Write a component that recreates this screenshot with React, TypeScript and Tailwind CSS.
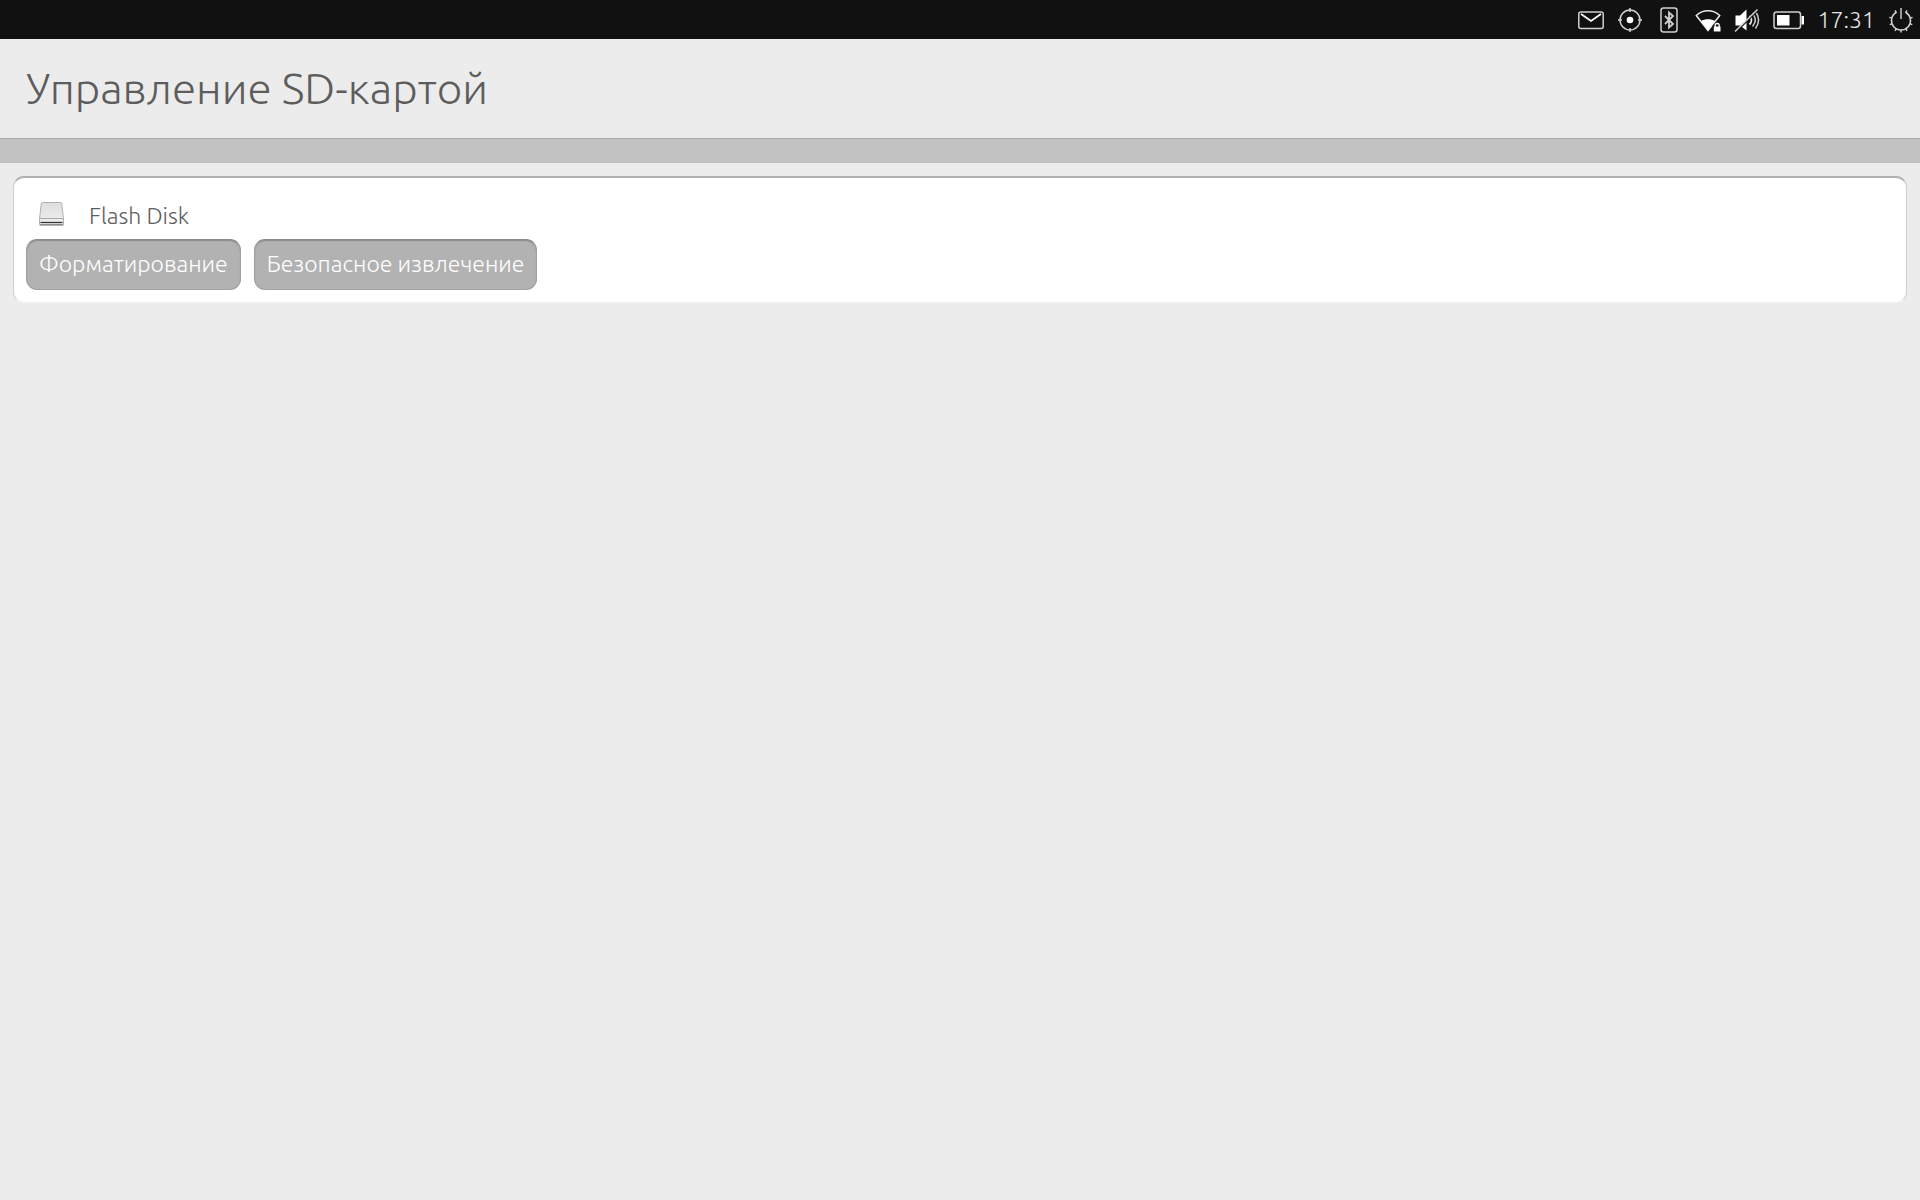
type IconProps = { label: string; children: React.ReactNode; width?: string; box?: string };

function StatusIcon({ label, children, width = "w-[26px]", box = "0 0 26 26" }: IconProps) {
  return (
    <svg
      role="img"
      aria-label={label}
      viewBox={box}
      className={`${width} h-[26px] shrink-0`}
      fill="none"
      stroke="#cfcfcf"
      strokeWidth="1.5"
    >
      {children}
    </svg>
  );
}

// the power symbol is a broken ring with short rays around it
const RAYS = [20, 60, 90, 120, 160, -15, -165].map((deg) => {
  const a = (deg * Math.PI) / 180;
  return {
    x1: 13 + 9.5 * Math.cos(a),
    y1: 13.5 + 9.5 * Math.sin(a),
    x2: 13 + 12 * Math.cos(a),
    y2: 13.5 + 12 * Math.sin(a),
  };
});

function StatusBar() {
  return (
    <header className="flex h-[39px] items-center justify-end gap-[13px] bg-[#111] pr-[6px] text-[#e6e6e6]">
      <StatusIcon label="Сообщения">
        <rect x="0.8" y="5" width="24.4" height="16.5" rx="2" />
        <path d="M3 7 13 14l10-7" stroke="#fff" strokeWidth="1.8" />
      </StatusIcon>
      <StatusIcon label="Местоположение">
        <circle cx="13" cy="13" r="10" />
        <circle cx="13" cy="13" r="3.3" fill="#fff" stroke="none" />
        <path d="M13 1v4M13 21v4M1 13h4M21 13h4" />
      </StatusIcon>
      <StatusIcon label="Bluetooth">
        <rect x="5" y="1" width="16" height="24" rx="2.5" />
        <path d="m9 9 8 8-4 3.500V5.500L17 9l-8 8" strokeWidth="1.8" />
      </StatusIcon>
      <StatusIcon label="Wi-Fi">
        <path d="M1.300 8.500C8 2.300 18 2.300 24.700 8.500L13 23.500Z" stroke="#e8e8e8" />
        <path d="M6 14c4-2.500 10-2.500 14 0L13 23.500Z" fill="#fff" stroke="none" />
        <path d="M17.500 24.500v-6q3.500-5 8.500 0v6Z" fill="#111" stroke="none" />
        <path d="M18.800 19.500h6.700v5h-6.700Z" fill="#fff" stroke="none" />
        <path d="M20.200 20v-1.500a2 2 0 0 1 4 0V20" stroke="#fff" strokeWidth="1.300" />
      </StatusIcon>
      <StatusIcon label="Звук выключен">
        <path d="M1.500 8.500h4.500L12.500 2.500v21L6 18.500H1.500Z" fill="#fff" stroke="none" />
        <path d="M15.500 9c2.500 2.500 2.500 6 0 8.500" stroke="#eee" strokeWidth="1.800" />
        <path d="M18.500 6.500c3.500 4 3.500 9 0 13M21.500 4.500c4 5.500 4 11.500 0 17" />
        <path d="M1.500 25.500 24.500 3" stroke="#111" strokeWidth="1.300" />
        <path d="M1 24.500 23.500 2.500" />
      </StatusIcon>
      <StatusIcon label="Батарея" width="w-[32px]" box="0 0 32 26">
        <rect x="1" y="5" width="26.500" height="16.500" rx="2.500" />
        <path d="M4 8h12.500v10.500H4Z" fill="#fff" stroke="none" />
        <path d="M28.500 9h2.500v8.500h-2.500Z" fill="#fff" stroke="none" />
      </StatusIcon>
      <time className="text-[23px] leading-[26px]">17:31</time>
      <button type="button" aria-label="Выключение" className="shrink-0">
        <StatusIcon label="Выключение">
          <path d="M8 5.500a9.500 9.500 0 1 0 10 0" />
          <path d="M13 1v11" stroke="#999" strokeWidth="2" />
          <path d="M8.500 6 7 3.500M17.500 6 19 3.500" />
          {RAYS.map((ray, i) => (
            <line key={i} {...ray} />
          ))}
        </StatusIcon>
      </button>
    </header>
  );
}

function DriveIcon() {
  return (
    <svg viewBox="0 0 26 26" className="h-[26px] w-[26px]" aria-hidden="true">
      <defs>
        <linearGradient id="drive" x1="0" y1="0" x2="0" y2="1">
          <stop offset="0" stopColor="#dedede" />
          <stop offset="1" stopColor="#f0f0f0" />
        </linearGradient>
      </defs>
      <path d="M3.500 1.500h18q1 0 1.200 1L24.500 18v5.500q0 1-1 1h-22q-1 0-1-1V18L2.300 2.500q.2-1 1.200-1Z" fill="url(#drive)" stroke="#b0b0b0" />
      <path d="M1 17.500h23" stroke="#aaa" />
      <path d="M1.500 21.500h22" stroke="#333" strokeWidth="1.300" />
      <path d="M1 23h23v1H1Z" fill="#8c8c8c" />
    </svg>
  );
}

function ActionButton({ children }: { children: React.ReactNode }) {
  return (
    <button
      type="button"
      className="h-[51px] rounded-[11px] border border-[#a0a0a0] border-t-[#8a8a8a] bg-[#b2b2b2] px-3 pb-[2px] text-[23px] leading-[26px] text-white shadow-[inset_0_1px_1px_#8a8a8a]"
    >
      {children}
    </button>
  );
}

export default function App() {
  return (
    <div className="min-h-screen bg-[#ececec] font-['Ubuntu','Noto_Sans',sans-serif] font-light text-[#5d5d5d]">
      <StatusBar />
      <h1 className="flex h-[99px] items-center px-[26px] pb-[2px] text-[44px] leading-[60px]">
        Управление SD-картой
      </h1>
      <div className="h-[25px] border-t border-[#a9a9a9] bg-[#c2c2c2]" />

      <main className="p-[13px]">
        <section className="rounded-[11px] border border-t-2 border-[#cfcfcf] border-t-[#b0b0b0] border-b-[#f1f1f1] bg-white px-3 pt-[11px] pb-3">
          <div className="flex h-[50px] items-center gap-6 pl-[13px]">
            <DriveIcon />
            <h2 className="pt-1 text-[23px] leading-[26px]">Flash Disk</h2>
          </div>
          <div className="flex flex-wrap gap-[13px]">
            <ActionButton>Форматирование</ActionButton>
            <ActionButton>Безопасное извлечение</ActionButton>
          </div>
        </section>
      </main>
    </div>
  );
}
